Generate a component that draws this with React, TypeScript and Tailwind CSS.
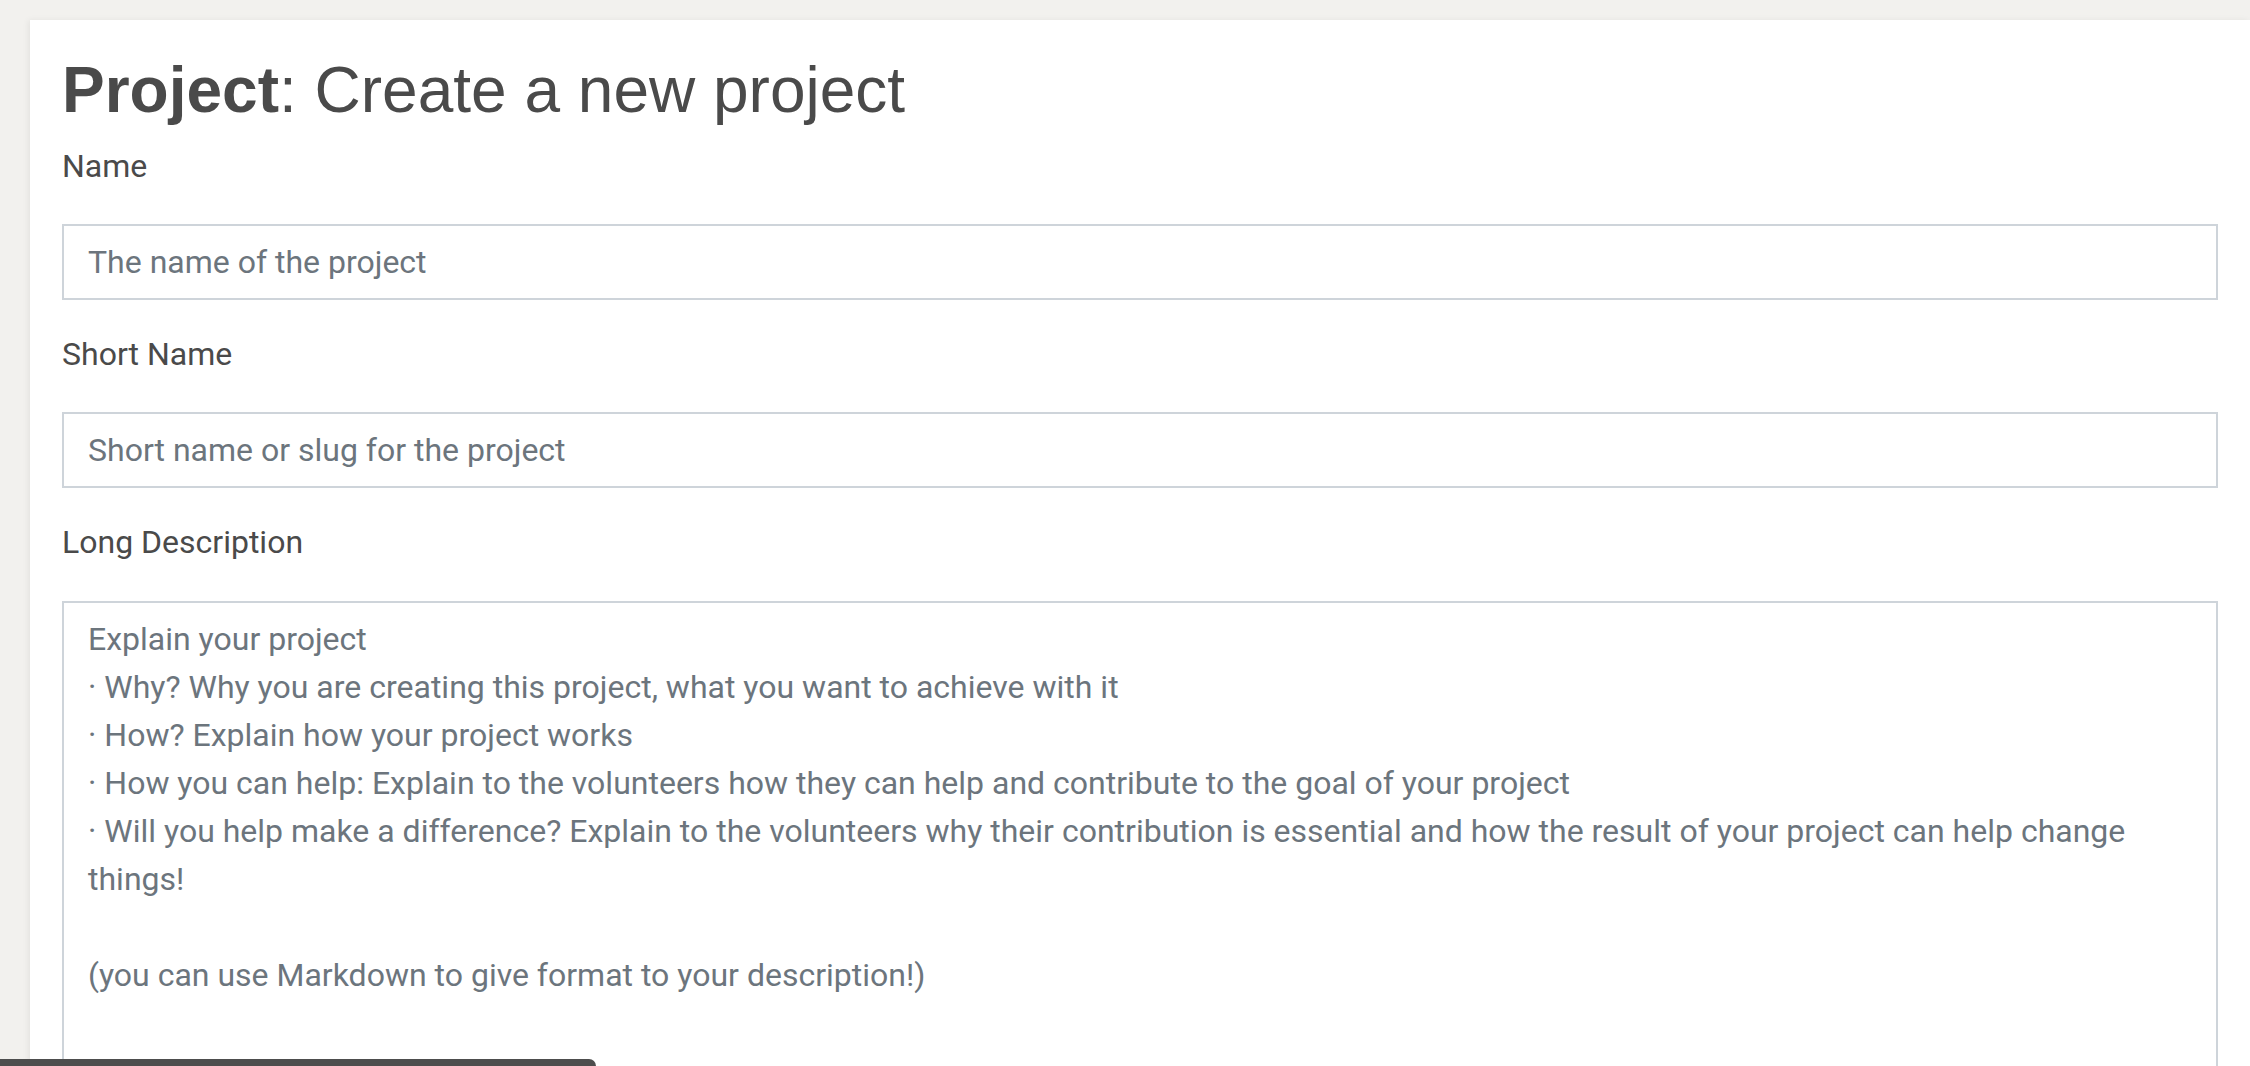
import React from 'react';

const labelCls = "block text-[32px] leading-[48px] text-[#4a4a4a]";
const fieldCls =
  "block w-full border-2 border-[#ced4da] bg-white px-[24px] py-[12px] text-[32px] leading-[48px] text-[#495057] placeholder:text-[#6c757d] outline-none";

const App: React.FC = () => {
  return (
    <div className="min-h-screen h-[1066px] overflow-hidden bg-[#f2f1ee] pt-[20px] pl-[30px] font-['Roboto',sans-serif]">
      <div className="relative h-full bg-white px-[32px] pt-[32px] shadow-[-2px_0_6px_rgba(0,0,0,0.06)]">
        <h2 className="mb-[13px] font-['Liberation_Sans',Arial,sans-serif] text-[64px] leading-[76.8px] text-[#4a4a4a]">
          <span className="font-bold">Project</span>: Create a new project
        </h2>

        {/* Name */}
        <div className="mb-[30px]">
          <label className={`${labelCls} mb-[34px]`}>Name</label>
          <input className={`${fieldCls} h-[76px]`} placeholder="The name of the project" />
        </div>

        {/* Short name */}
        <div className="mb-[30px]">
          <label className={`${labelCls} mb-[34px]`}>Short Name</label>
          <input className={`${fieldCls} h-[76px]`} placeholder="Short name or slug for the project" />
        </div>

        {/* Long description */}
        <div>
          <label className={`${labelCls} mb-[35px]`}>Long Description</label>
          <textarea
            className={`${fieldCls} h-[520px] resize-none`}
            placeholder={
              "Explain your project\n· Why? Why you are creating this project, what you want to achieve with it\n· How? Explain how your project works\n· How you can help: Explain to the volunteers how they can help and contribute to the goal of your project\n· Will you help make a difference? Explain to the volunteers why their contribution is essential and how the result of your project can help change things!\n\n(you can use Markdown to give format to your description!)"
            }
          />
        </div>
      </div>

      {/* bottom bar peeking in */}
      <div className="fixed bottom-0 left-0 h-[7px] w-[596px] rounded-tr-[8px] bg-[#4d4d4d]" />
    </div>
  );
};

export default App;
